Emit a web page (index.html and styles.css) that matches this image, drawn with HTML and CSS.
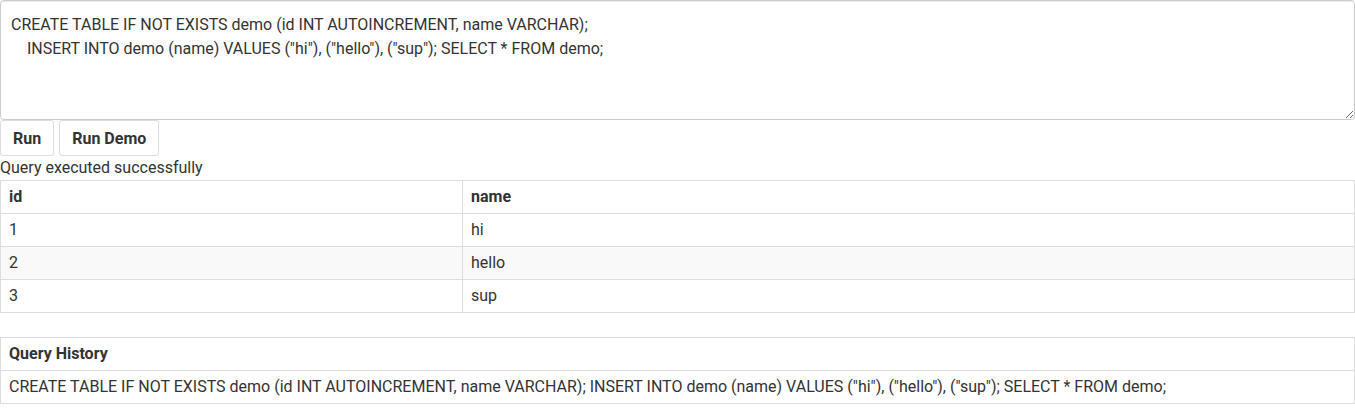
FILE: index.html
```html
<!DOCTYPE html>
<html>
<head>
<meta charset="utf-8">
<link rel="stylesheet" href="styles.css">
</head>
<body>
<textarea class="editor">CREATE TABLE IF NOT EXISTS demo (id INT AUTOINCREMENT, name VARCHAR);
    INSERT INTO demo (name) VALUES ("hi"), ("hello"), ("sup"); SELECT * FROM demo;</textarea>
<div class="actions">
  <button class="btn">Run</button>
  <button class="btn">Run Demo</button>
</div>
<div class="status">Query executed successfully</div>
<table class="results">
  <thead>
    <tr><th class="col-id">id</th><th>name</th></tr>
  </thead>
  <tbody>
    <tr><td>1</td><td>hi</td></tr>
    <tr class="striped"><td>2</td><td>hello</td></tr>
    <tr><td>3</td><td>sup</td></tr>
  </tbody>
</table>
<div class="panel">
  <div class="panel-heading">Query History</div>
  <div class="panel-body">CREATE TABLE IF NOT EXISTS demo (id INT AUTOINCREMENT, name VARCHAR); INSERT INTO demo (name) VALUES ("hi"), ("hello"), ("sup"); SELECT * FROM demo;</div>
</div>
</body>
</html>
```

FILE: styles.css
```css
* { box-sizing: border-box; }
html, body { margin: 0; padding: 0; background: #fff; }
body {
  font-family: Roboto, "Liberation Sans", sans-serif;
  font-size: 16px;
  line-height: 20px;
  color: #333;
}
.editor {
  display: block;
  width: 100%;
  height: 120px;
  margin: 0;
  padding: 12px 10px;
  border: 1px solid #ccc;
  border-radius: 4px;
  box-shadow: inset 0 1px 1px rgba(0,0,0,0.075);
  font-family: Roboto, "Liberation Sans", sans-serif;
  font-size: 16px;
  line-height: 24px;
  color: #333;
  resize: vertical;
}
.actions {
  display: flex;
  gap: 5px;
}
.btn {
  height: 36px;
  padding: 0 12px;
  background: #fff;
  border: 1px solid #ddd;
  border-radius: 3px;
  font-family: Roboto, "Liberation Sans", sans-serif;
  font-size: 16px;
  font-weight: bold;
  color: #333;
}
.status {
  height: 24px;
  line-height: 24px;
}
.results {
  width: 100%;
  border-collapse: collapse;
  margin-bottom: 24px;
}
.results th, .results td {
  border: 1px solid #ddd;
  padding: 6px 8px;
  text-align: left;
  height: 33px;
  line-height: 20px;
}
.results th { font-weight: bold; }
.results .col-id { width: 462px; }
.results .striped td { background: #f9f9f9; }
.panel {
  border: 1px solid #ddd;
}
.panel-heading {
  font-weight: bold;
  padding: 6px 8px;
  height: 33px;
  line-height: 20px;
  border-bottom: 1px solid #ddd;
}
.panel-body {
  padding: 6px 8px;
  height: 32px;
  line-height: 20px;
}
```
